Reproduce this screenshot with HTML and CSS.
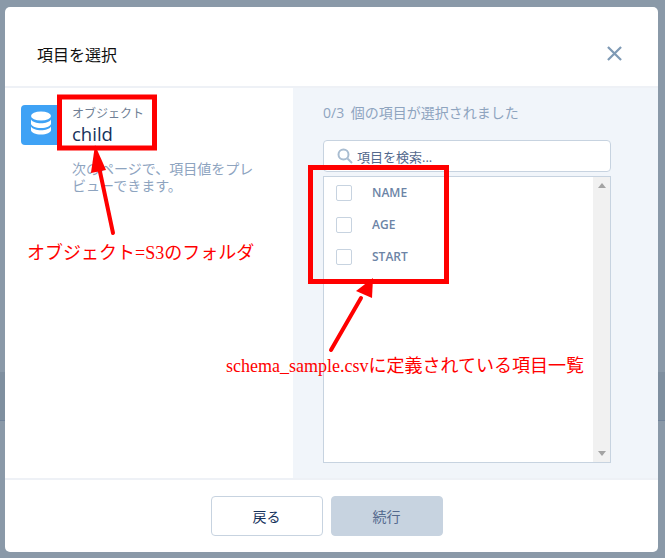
FILE: index.html
```html
<!DOCTYPE html>
<html lang="ja">
<head>
<meta charset="utf-8">
<title>項目を選択</title>
<link rel="stylesheet" href="styles.css">
</head>
<body>
<div class="backdrop-band"></div>
<main class="modal">
  <header class="modal-header">
    <h1 class="modal-title">項目を選択</h1>
    <button class="close" aria-label="閉じる">
      <svg width="15" height="15" viewBox="0 0 16 16"><path d="M1 1 L15 15 M15 1 L1 15" stroke="#7f9ab5" stroke-width="2.400" fill="none"/></svg>
    </button>
  </header>
  <section class="modal-body">
    <aside class="left">
      <div class="obj-icon">
        <svg width="24" height="28" viewBox="0 0 24 28" fill="#fff">
          <ellipse cx="12" cy="5" rx="10" ry="4.500"/>
          <path d="M2 8.500c1.500 2.600 5.500 3.700 10 3.700s8.500-1.100 10-3.700v4c0 2.500-4.500 4.500-10 4.500S2 15 2 12.500z"/>
          <path d="M2 15.500c1.500 2.600 5.500 3.700 10 3.700s8.500-1.100 10-3.700v3.500c0 2.500-4.500 4.500-10 4.500S2 21.500 2 19z"/>
        </svg>
      </div>
      <div class="obj-text">
        <div class="obj-label">オブジェクト</div>
        <div class="obj-name">child</div>
        <p class="obj-hint">次のページで、項目値をプレビューできます。</p>
      </div>
    </aside>
    <div class="right">
      <div class="count">0/3 個の項目が選択されました</div>
      <div class="search">
        <svg class="search-icon" width="16" height="16" viewBox="0 0 16 16" fill="none" stroke="#a9bdd1" stroke-width="2"><circle cx="6.500" cy="6.500" r="5"/><path d="M10.500 10.500 L15 15"/></svg>
        <span>項目を検索...</span>
      </div>
      <div class="list">
        <ul class="rows">
          <li class="row"><span class="check"></span><span class="row-label">NAME</span></li>
          <li class="row"><span class="check"></span><span class="row-label">AGE</span></li>
          <li class="row"><span class="check"></span><span class="row-label">START</span></li>
        </ul>
        <div class="scrollbar">
          <span class="tri-up"></span>
          <span class="tri-down"></span>
        </div>
      </div>
    </div>
  </section>
  <footer class="modal-footer">
    <button class="btn btn-back">戻る</button>
    <button class="btn btn-next">続行</button>
  </footer>
</main>
<svg class="overlay" width="665" height="558" viewBox="0 0 665 558">
  <rect x="59.500" y="97" width="95" height="51" fill="none" stroke="#f00" stroke-width="5"/>
  <rect x="310.500" y="167.500" width="136" height="114" fill="none" stroke="#f00" stroke-width="5"/>
  <path d="M113 233 L99 167" stroke="#f00" stroke-width="4" stroke-linecap="round" fill="none"/>
  <path d="M95 145 L106 170 L91 173 Z" fill="#f00"/>
  <path d="M331 350 L361 298" stroke="#f00" stroke-width="4" stroke-linecap="round" fill="none"/>
  <path d="M373 278 L372 298 L356 291 Z" fill="#f00"/>
</svg>
<div class="note note-a">オブジェクト=S3のフォルダ</div>
<div class="note note-b">schema_sample.csvに定義されている項目一覧</div>
</body>
</html>
```
FILE: styles.css
```css
* { box-sizing: border-box; }
html, body { margin: 0; padding: 0; }
body {
  width: 665px;
  height: 558px;
  background: #8a99a8;
  overflow: hidden;
  position: relative;
  font-family: "Open Sans", "Noto Sans CJK JP", sans-serif;
  padding: 7px 7px 6px 5px;
}
.backdrop-band {
  position: absolute;
  left: 0;
  right: 0;
  top: 372px;
  height: 49px;
  background: #7f8f9f;
  border-bottom: 1px solid #70839a;
}
.modal {
  position: relative;
  width: 653px;
  height: 545px;
  background: #fff;
  border-radius: 5px;
  display: flex;
  flex-direction: column;
  overflow: hidden;
}
.modal-header {
  height: 81px;
  flex: none;
  display: flex;
  align-items: center;
  justify-content: space-between;
  padding: 14px 36px 0 32px;
  border-bottom: 2px solid #eef1f6;
}
.modal-title {
  margin: 0;
  font-size: 16px;
  font-weight: 400;
  color: #111;
}
.close {
  border: 0;
  padding: 0;
  background: none;
  display: flex;
}
.modal-body {
  flex: 1;
  display: flex;
  min-height: 0;
}
.left {
  width: 288px;
  flex: none;
  display: flex;
  gap: 11px;
  padding: 17px 16px 0 16px;
}
.obj-icon {
  width: 40px;
  height: 40px;
  flex: none;
  background: #3fa2f5;
  border-radius: 4px;
  display: flex;
  align-items: center;
  justify-content: center;
}
.obj-label {
  font-size: 12px;
  line-height: 17px;
  color: #6f7f95;
}
.obj-name {
  font-size: 18.500px;
  line-height: 24px;
  color: #16325c;
}
.obj-hint {
  margin: 14px 0 0;
  font-size: 14px;
  line-height: 17px;
  color: #8ea4bf;
  width: 186px;
}
.right {
  flex: 1;
  background: #f1f5fa;
  padding: 15px 47px 15px 30px;
  display: flex;
  flex-direction: column;
}
.count {
  font-size: 14px;
  line-height: 20px;
  color: #8ea4bf;
  margin-bottom: 17px;
  word-spacing: 3px;
}
.search {
  height: 32px;
  flex: none;
  background: #fff;
  border: 1px solid #c7d3e0;
  border-radius: 4px;
  display: flex;
  align-items: center;
  gap: 4px;
  padding-left: 13px;
  font-size: 13px;
  color: #54698d;
}
.list {
  flex: 1;
  margin-top: 4px;
  background: #fff;
  border: 1px solid #c7d3e0;
  display: flex;
  min-height: 0;
}
.rows {
  list-style: none;
  margin: 0;
  padding: 0;
  flex: 1;
}
.row {
  height: 32px;
  display: flex;
  align-items: center;
  padding-left: 12px;
}
.check {
  width: 16px;
  height: 16px;
  border: 1px solid #c7d3e0;
  border-radius: 2px;
  background: #fff;
}
.row-label {
  margin: 0 0 2px 20px;
  font-size: 12px;
  font-weight: 600;
  color: #6c84a6;
}
.scrollbar {
  width: 17px;
  flex: none;
  background: #f1f1f1;
  display: flex;
  flex-direction: column;
  justify-content: space-between;
  align-items: center;
  padding: 6px 0;
}
.tri-up, .tri-down {
  width: 0;
  height: 0;
  border-left: 4px solid transparent;
  border-right: 4px solid transparent;
}
.tri-up { border-bottom: 5px solid #a3a3a3; }
.tri-down { border-top: 5px solid #a3a3a3; }
.modal-footer {
  height: 74px;
  flex: none;
  border-top: 2px solid #eef1f6;
  display: flex;
  justify-content: center;
  align-items: center;
  gap: 8px;
  padding: 0 10px 0 0;
}
.btn {
  width: 112px;
  height: 40px;
  border-radius: 4px;
  font-family: "Noto Sans CJK JP", sans-serif;
  font-size: 14px;
  padding: 0;
}
.btn-back {
  background: #fff;
  border: 1px solid #c7d3e0;
  color: #16325c;
}
.btn-next {
  background: #c7d3e0;
  border: 1px solid #c7d3e0;
  color: #54698d;
}
.overlay {
  position: absolute;
  left: 0;
  top: 0;
  pointer-events: none;
}
.note {
  position: absolute;
  color: #f00;
  font-family: "Liberation Serif", "Noto Sans CJK JP", serif;
  font-size: 18px;
  line-height: 24px;
  white-space: nowrap;
}
.note-a { left: 27px; top: 241px; }
.note-b { left: 226px; top: 354px; }
```
